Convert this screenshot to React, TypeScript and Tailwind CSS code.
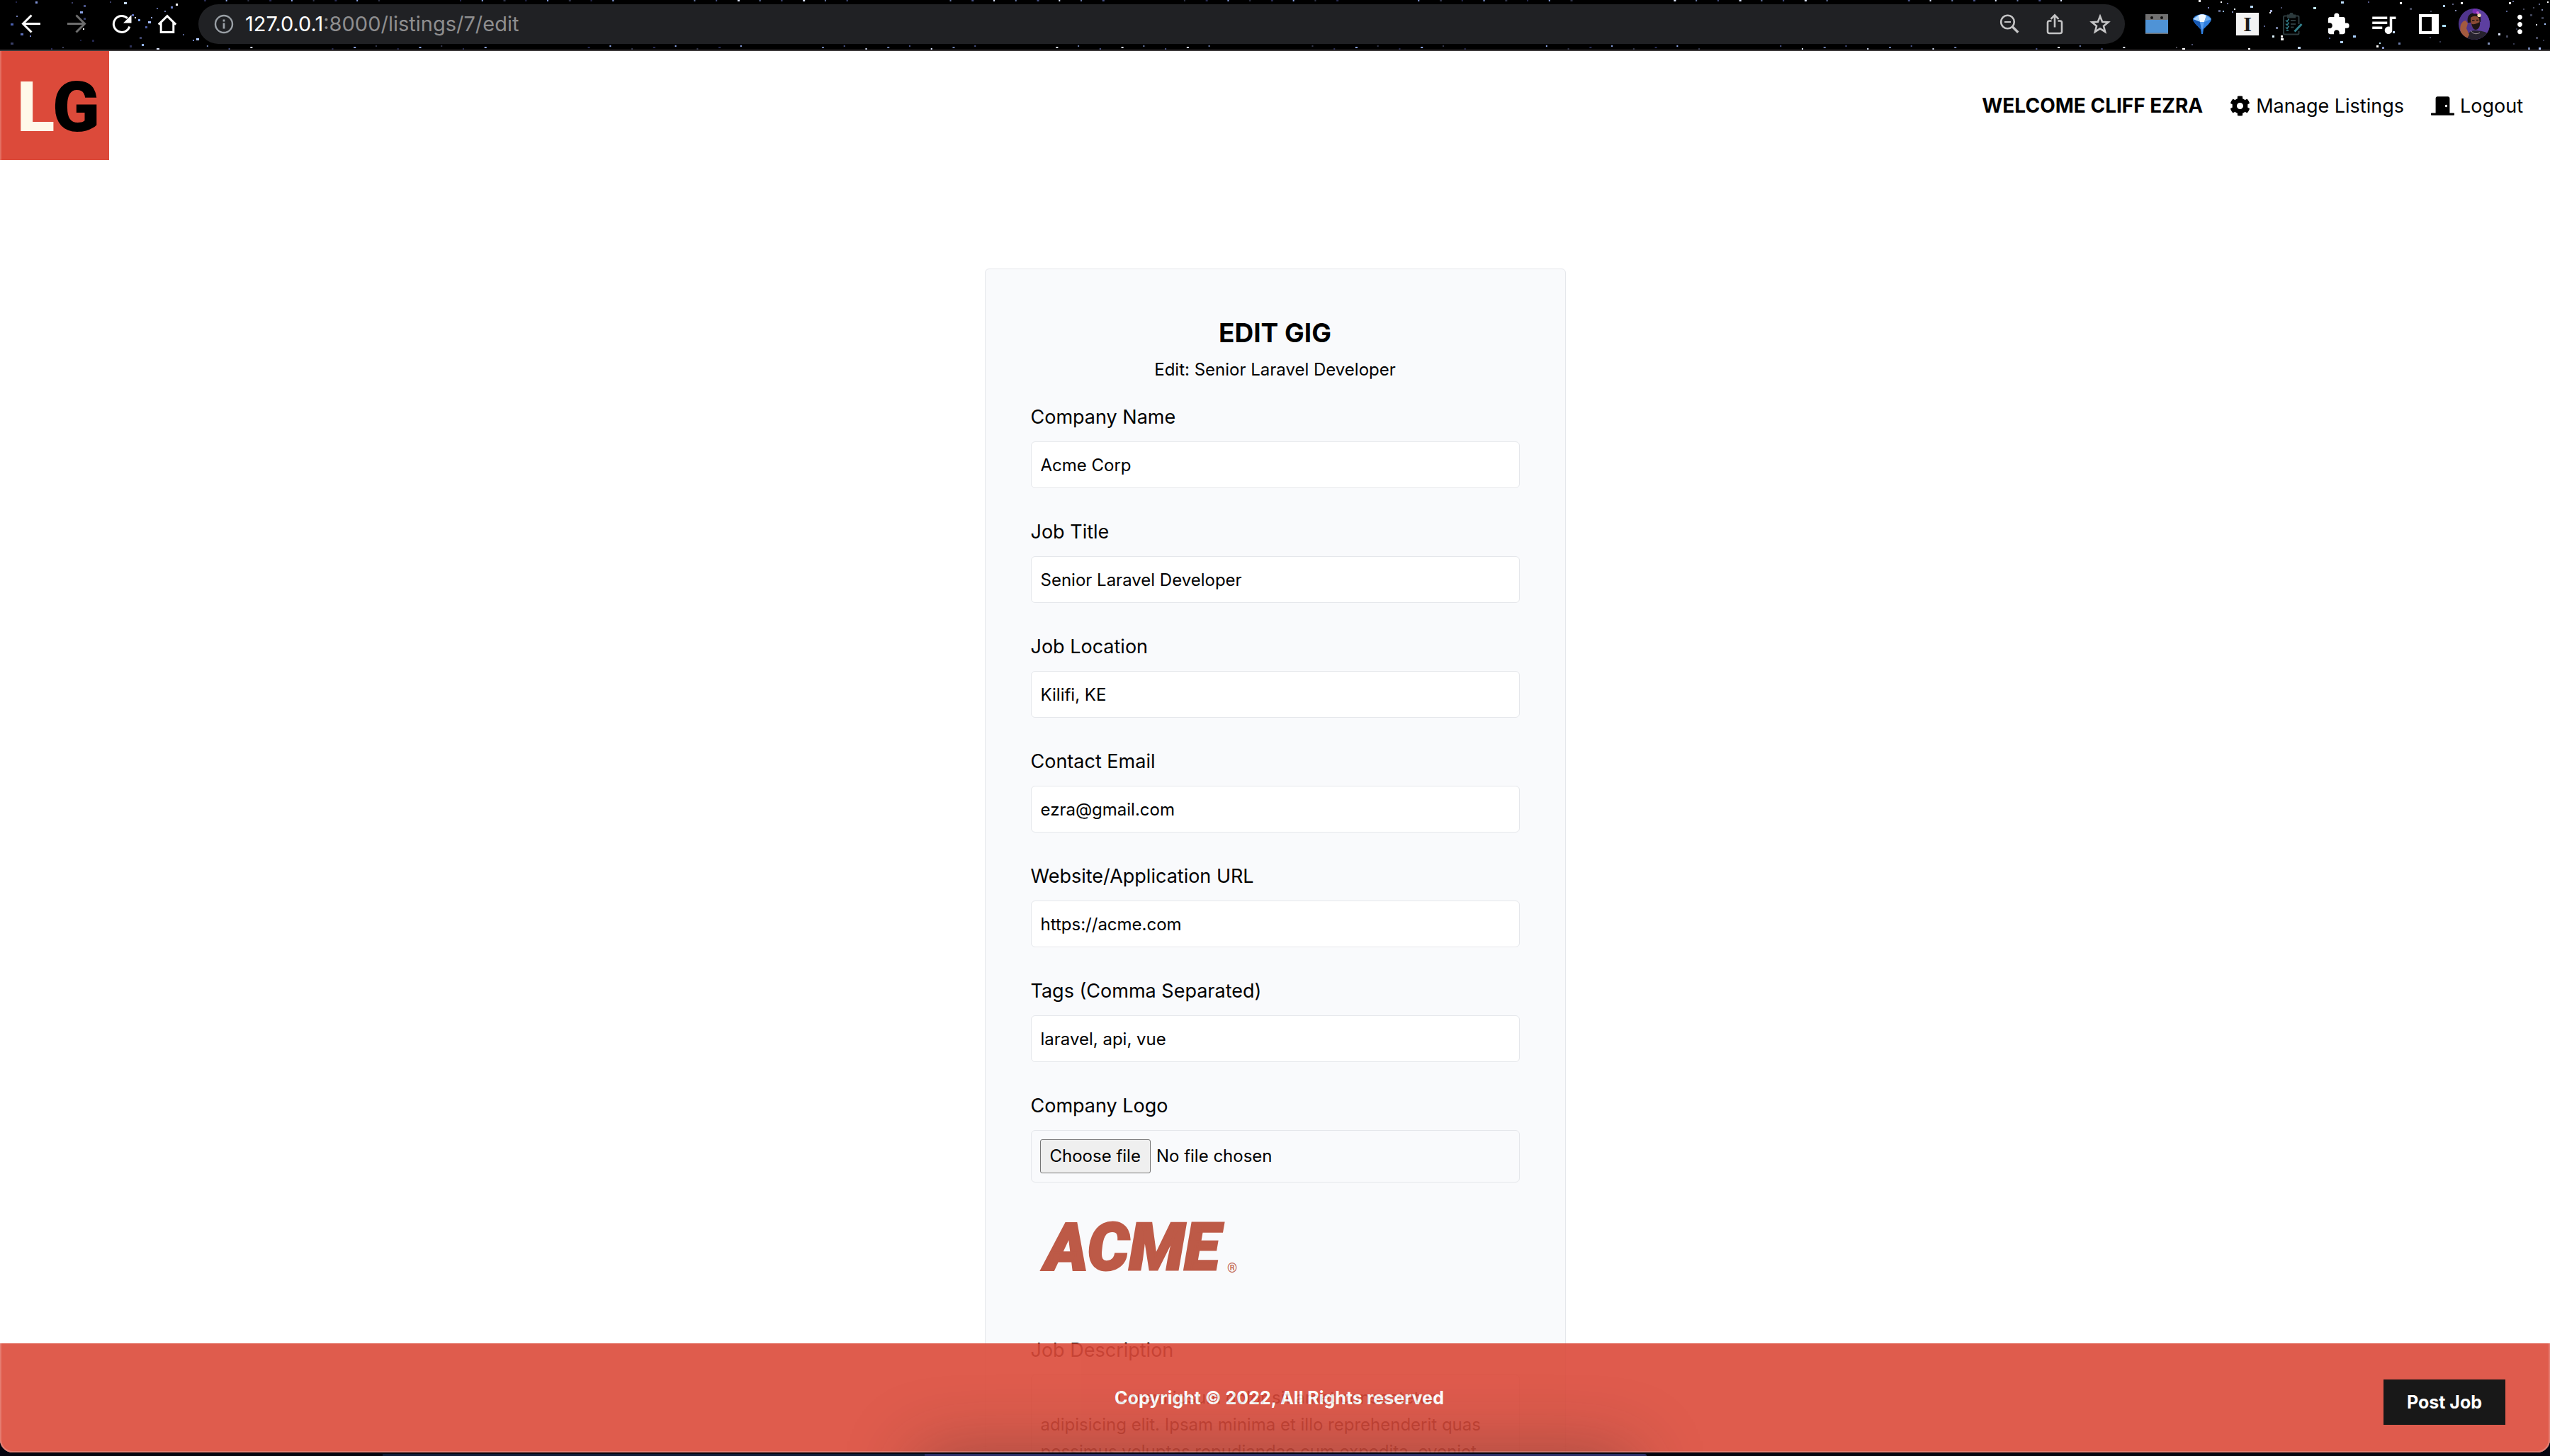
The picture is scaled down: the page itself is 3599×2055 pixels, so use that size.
import React from "react";
import { FaCog, FaDoorClosed } from "react-icons/fa";
import { MdQueueMusic, MdExtension, MdMoreVert } from "react-icons/md";

type Star = [number, number, number, string];

const LEFT_STARS: Star[] = [
  [50, 2, 3, "#7f93d8"], [175, 3, 4, "#c6dcff"], [101, 3, 2, "#3a3d66"], [118, 7, 3, "#4a5488"],
  [113, 16, 4, "#8ea6e8"], [118, 25, 3, "#333a66"], [248, 5, 3, "#ffffff"], [241, 9, 3, "#6f83c8"],
  [221, 11, 2, "#5a679c"], [190, 24, 2, "#ffffff"], [195, 27, 3, "#7fa0e8"], [209, 30, 4, "#a8c0ff"],
  [205, 37, 3, "#4a5aa0"], [15, 33, 4, "#4a5fae"], [29, 47, 4, "#5b6cb4"], [42, 50, 2, "#6e7cc0"],
  [15, 60, 4, "#3a3f66"], [117, 40, 2, "#ffffff"], [130, 56, 3, "#22264c"], [197, 52, 3, "#40466e"],
  [200, 62, 3, "#93b4ff"], [183, 64, 3, "#2d3158"], [221, 68, 4, "#dfe8ff"], [277, 54, 4, "#b5cdff"],
  [272, 56, 2, "#6f83c8"], [258, 48, 2, "#55608f"], [232, 15, 2, "#6b76a8"], [213, 24, 2, "#8fa0d8"],
  [186, 20, 3, "#5a6bb4"], [22, 2, 2, "#20234a"], [155, 2, 2, "#3c4068"], [88, 66, 2, "#3b3f5a"],
  [72, 68, 2, "#26295a"], [113, 56, 2, "#1b2044"], [23, 22, 2, "#6c7ab0"],
];

const RIGHT_STARS: Star[] = [
  [781, 2, 2, "#53588a"], [542, 0, 3, "#ffffff"], [582, 4, 2, "#6b6f9c"], [573, 2, 2, "#ffffff"],
  [555, 10, 2, "#7f86c0"], [570, 14, 3, "#60688c"], [576, 15, 2, "#8fb4e8"], [589, 16, 2, "#8088b0"],
  [592, 12, 2, "#dff4ff"], [615, 8, 4, "#b8d8ff"], [643, 14, 3, "#a0a8d0"], [642, 17, 2, "#ffffff"],
  [658, 10, 2, "#4c5070"], [634, 36, 2, "#55608f"], [651, 38, 3, "#6b7698"], [646, 50, 3, "#dff4ff"],
  [658, 54, 4, "#ffffff"], [612, 68, 3, "#ffffff"], [532, 62, 2, "#4c5070"], [519, 68, 4, "#ffffff"],
  [510, 66, 2, "#4c4a55"], [704, 10, 4, "#bfe8ff"], [743, 2, 4, "#bfe0ff"], [826, 3, 3, "#ffffff"],
  [840, 11, 3, "#44485c"], [869, 15, 2, "#44485c"], [887, 7, 3, "#a8c8ff"], [900, 5, 2, "#5c6080"],
  [886, 35, 5, "#a8dcff"], [868, 52, 2, "#44485c"], [882, 58, 2, "#33374c"], [760, 50, 4, "#a8d0ff"],
  [726, 53, 2, "#55608f"], [742, 58, 4, "#b0d0ff"], [658, 50, 3, "#ffffff"], [682, 66, 4, "#c0d8ff"],
  [797, 60, 2, "#bfe8ff"], [793, 64, 3, "#ffffff"], [801, 66, 3, "#8090c0"], [824, 60, 3, "#6b7ca8"],
  [816, 44, 3, "#c8dcff"], [950, 60, 3, "#8090b8"], [965, 47, 3, "#dfe8ff"], [976, 50, 3, "#44485c"],
  [980, 3, 3, "#ffffff"], [985, 1, 2, "#60688c"], [976, 15, 2, "#55608f"], [1000, 12, 2, "#44485c"],
  [1010, 20, 3, "#3c4054"], [1018, 34, 2, "#dfe8ff"], [1026, 13, 2, "#8088b0"], [1022, 5, 2, "#60688c"],
  [1030, 33, 2, "#a8c8ff"], [1018, 52, 3, "#44485c"], [1007, 67, 3, "#6b7ca8"], [1022, 67, 3, "#a8c0ff"],
  [1028, 56, 2, "#33374c"], [1034, 2, 2, "#ffffff"], [1026, 24, 3, "#3c4054"], [986, 61, 2, "#33374c"],
  [912, 3, 3, "#ffffff"], [904, 14, 2, "#8088b0"], [990, 40, 2, "#33374c"], [1014, 10, 2, "#44485c"],
];

const STAR_TINTS = ["#2a2d55", "#4a5488", "#8ea6e8", "#dfe8ff", "#33374c", "#6b7ca8"];
const EDGE_STARS = Array.from({ length: 130 }, (_, i) => ({
  x: 8 + ((i * 61.8034) % 76),
  y: i % 2 ? 63 + ((i * 7) % 6) : (i * 5) % 5,
  size: 2 + (i % 3 === 0 ? 1 : 0),
  tint: STAR_TINTS[(i * 7 + (i >> 2)) % STAR_TINTS.length],
}));

function StarField() {
  return (
    <div aria-hidden="true" className="absolute inset-0 flex justify-between overflow-hidden">
      <svg width="290" height="70" className="shrink-0">
        {LEFT_STARS.map(([x, y, s, c], i) => (
          <rect key={i} x={x} y={y} width={s} height={s > 3 ? 3 : s} fill={c} />
        ))}
      </svg>
      <svg height="70" className="absolute inset-0 w-full">
        {EDGE_STARS.map((s, i) => (
          <rect key={i} x={`${s.x}%`} y={s.y} width={s.size} height="2" fill={s.tint} />
        ))}
      </svg>
      <svg width="1080" height="70" viewBox="-30 0 1080 70" className="shrink-0">
        {RIGHT_STARS.map(([x, y, s, c], i) => (
          <rect key={i} x={x + 12} y={y} width={s} height={s > 3 ? 3 : s} fill={c} />
        ))}
      </svg>
    </div>
  );
}

function BarButton({ label, children }: { label: string; children: React.ReactNode }) {
  return (
    <button type="button" aria-label={label} className="flex h-14 w-16 shrink-0 items-center justify-center text-white">
      {children}
    </button>
  );
}

function BrowserBar() {
  return (
    <header className="relative flex h-[72px] shrink-0 items-center border-b-2 border-[#3e3a3b] bg-black pr-[11px] pb-0.5 pl-3">
      <StarField />
      <nav aria-label="Browser" className="relative flex">
        <BarButton label="Back">
          <svg width="28" height="28" viewBox="0 0 28 28" fill="none" stroke="currentColor" strokeWidth="3">
            <path d="M27 13.5H3M14.5 1.5l-12 12 12 12" />
          </svg>
        </BarButton>
        <BarButton label="Forward">
          <svg width="28" height="28" viewBox="0 0 28 28" fill="none" stroke="#6d6d6d" strokeWidth="3">
            <path d="M1 13.5h24M13.5 1.5l12 12-12 12" />
          </svg>
        </BarButton>
        <BarButton label="Reload">
          <svg width="28" height="28" viewBox="0 0 28 28" fill="none" stroke="currentColor" strokeWidth="3">
            <path d="M24.8 17.5A11.5 11.5 0 1 1 21.8 5.6" />
            <path d="M27.5 1v11.5H16z" fill="currentColor" stroke="none" />
          </svg>
        </BarButton>
        <BarButton label="Home">
          <svg width="28" height="28" viewBox="0 0 28 28" fill="none" stroke="currentColor" strokeWidth="3">
            <path d="M1.8 14.6L14 2.6l12.2 12" />
            <path d="M5.2 12v13.4h17.6V12" />
          </svg>
        </BarButton>
      </nav>
      <div className="relative mr-[13px] ml-3 flex h-14 flex-1 items-center rounded-full bg-[#202124] pr-[3px] pl-[22px]">
        <svg width="28" height="28" viewBox="0 0 28 28" fill="none" stroke="#9aa0a6" strokeWidth="2.4" aria-hidden="true">
          <circle cx="14" cy="14" r="12" />
          <path d="M14 12.5v8M14 7.5v3" strokeWidth="2.8" />
        </svg>
        <p className="ml-4 flex-1 text-[29px] leading-8 text-[#8e8e8f]">
          <span className="text-white">127.0.0.1</span>:8000/listings/7/edit
        </p>
        <BarButton label="Zoom out">
          <svg width="28" height="28" viewBox="0 0 28 28" fill="none" stroke="#c4c4c5" strokeWidth="2.6">
            <circle cx="11.5" cy="11" r="9.3" />
            <path d="M18.3 17.8l8 8" strokeWidth="3.4" />
            <path d="M7 11h9" strokeWidth="2" />
          </svg>
        </BarButton>
        <BarButton label="Share">
          <svg width="28" height="30" viewBox="0 0 28 30" fill="none" stroke="#c4c4c5" strokeWidth="2.6">
            <path d="M9.5 10.5H6.5a2.5 2.5 0 0 0-2.5 2.5v12.5a2.5 2.5 0 0 0 2.5 2.5h15a2.5 2.5 0 0 0 2.5-2.5V13a2.5 2.5 0 0 0-2.5-2.5h-3" />
            <path d="M14 19.5V2.5M8.5 7.8L14 2.3l5.5 5.5" />
          </svg>
        </BarButton>
        <BarButton label="Bookmark">
          <svg width="30" height="30" viewBox="0 0 30 30" fill="none" stroke="#c4c4c5" strokeWidth="2.6">
            <path d="M15 4l3.100 7.800 8.400.6-6.500 5.300 2.100 8.200L15 21.400l-7.100 4.500L10 17.700 3.500 12.400l8.400-.6z" />
          </svg>
        </BarButton>
      </div>
      <div className="relative flex">
        <BarButton label="Window extension">
          <svg width="32" height="28" viewBox="0 0 32 28">
            <rect width="32" height="28" rx="1" fill="#4f93d6" />
            <rect width="32" height="8" rx="1" fill="#717171" />
            <circle cx="9" cy="5" r="2" fill="#111" />
            <circle cx="23" cy="5" r="2" fill="#111" />
            <rect y="26.5" width="32" height="1.5" fill="#6d6d6d" />
          </svg>
        </BarButton>
        <BarButton label="Gem extension">
          <svg width="28" height="30" viewBox="0 0 28 30">
            <path d="M1 8C3 3 9 1 14 1s11 2 13 7c0 4-6 9-11 14l-1 7h-2l-1-7C7 17 1 12 1 8z" fill="#2f7fe0" />
            <path d="M8 3c4-2.500 8-2.500 12 0l-3 9h-6z" fill="#f2f9ff" />
            <path d="M1 8l7-5 3 9z" fill="#a9d3fb" />
            <path d="M27 8l-7-5-3 9z" fill="#69a9ee" />
            <path d="M1 8l10 4 2 12C8 18 2 13 1 8z" fill="#1759b4" />
            <path d="M11 12h6l-3 13z" fill="#5ba0f0" />
          </svg>
        </BarButton>
        <BarButton label="Reader extension">
          <span className="flex size-8 items-center justify-center bg-[#f3f3f3] font-['Liberation_Serif',serif] text-[30px] leading-8 font-bold text-[#1a1a1a]">
            I
          </span>
        </BarButton>
        <BarButton label="Checklist extension">
          <svg width="28" height="32" viewBox="0 0 28 32" fill="none" stroke="#2c3a3d" strokeWidth="2">
            <path d="M7 4.500H2.500a1.500 1.500 0 0 0-1.500 1.500v23a1.500 1.500 0 0 0 1.500 1.500h18.500a1.500 1.500 0 0 0 1.500-1.500V26M16 4.500h5a1.500 1.500 0 0 1 1.500 1.500v10" />
            <path d="M7 3.500h2.500l1.500-2.500h2l1.500 2.500H17v3H7z" fill="#2c3a3d" />
            <path d="M11 11h7M11 16h7M11 20.500h4.500" />
            <path d="M4 10.500l2 2 2.500-4M4 15.500l2 2 2.500-4M4 20.500l2 2 2.500-4M5 25h3" stroke="#33808c" strokeWidth="1.500" />
            <path d="M16.500 26.500L26.500 16" stroke="#33808c" strokeWidth="3" />
          </svg>
        </BarButton>
        <BarButton label="Extensions">
          <MdExtension size={34} />
        </BarButton>
        <BarButton label="Media control">
          <MdQueueMusic size={42} />
        </BarButton>
        <BarButton label="Side panel">
          <svg width="28" height="28" viewBox="0 0 28 28">
            <path fillRule="evenodd" fill="currentColor" d="M0 0h28v28H0zM4 4v20h14V4z" />
          </svg>
        </BarButton>
        <BarButton label="Profile">
          <svg width="44" height="44" viewBox="0 0 44 44" className="rounded-full">
            <rect width="44" height="44" fill="#50358c" />
            <rect x="24" width="20" height="44" fill="#5d3fa0" />
            <path d="M12 44c0-9 4-13 11-13s17 2 21 6v7z" fill="#26222e" />
            <path d="M3 23c2-4 4-6 7-6l3 4-2 7 4 9-4 7C3 40 1 31 3 23z" fill="#a35a3e" />
            <path d="M13 20c-2-9 3-14 10-14s9 6 8 13z" fill="#1a1416" />
            <path d="M17 13c4-3 9-3 12 1l1 9c-1 5-4 7-7 6-4-1-6-7-6-16z" fill="#8a4a34" />
            <path d="M18 21c3 3 6 0 8 0l4-2c1 6-2 11-6 11-3 0-5-4-6-9z" fill="#1c1414" />
            <path d="M19 17h3.500M25 16.500h3" stroke="#1c1414" strokeWidth="1.500" />
            <path d="M17 31c3 5 8 6 13 3" stroke="#a89aa0" strokeWidth="1" fill="none" />
            <circle cx="23" cy="4" r="3.500" fill="#7a2fb8" />
            <circle cx="29" cy="9.500" r="2.600" fill="#f0d9b0" />
            <circle cx="27" cy="6" r="2" fill="#c75bd0" />
          </svg>
        </BarButton>
        <BarButton label="Menu">
          <MdMoreVert size={41} />
        </BarButton>
      </div>
    </header>
  );
}

function SiteLogo() {
  return (
    <a href="#" aria-label="Home page" className="block">
      <svg width="154" height="154" viewBox="0 0 154 154" className="block font-['Roboto',sans-serif] font-black">
        <rect width="154" height="154" fill="#dc4a3a" />
        <text x="24" y="113" fontSize="98" fill="#fff9e9">
          L<tspan fill="#000">G</tspan>
        </text>
      </svg>
    </a>
  );
}

function AcmeLogo() {
  return (
    <svg
      width="307"
      height="175"
      viewBox="0 0 307 175"
      role="img"
      aria-label="Acme company logo"
      className="mb-[38px] block font-['Roboto',sans-serif] font-black"
      fill="#bd5a47"
    >
      <text x="20" y="123" fontSize="92" fontStyle="italic" stroke="#bd5a47" strokeWidth="3">
        ACME
      </text>
      <text x="277" y="127" fontSize="18" fontWeight="400">
        ®
      </text>
    </svg>
  );
}

const FIELDS = [
  { id: "company", label: "Company Name", value: "Acme Corp" },
  { id: "title", label: "Job Title", value: "Senior Laravel Developer" },
  { id: "location", label: "Job Location", value: "Kilifi, KE" },
  { id: "email", label: "Contact Email", value: "ezra@gmail.com" },
  { id: "website", label: "Website/Application URL", value: "https://acme.com" },
  { id: "tags", label: "Tags (Comma Separated)", value: "laravel, api, vue" },
];

const DESCRIPTION =
  "                Lorem ipsum dolor sit amet consectetur\nadipisicing elit. Ipsam minima et illo reprehenderit quas\npossimus voluptas repudiandae cum expedita, eveniet";

function FieldLabel({ htmlFor, children }: { htmlFor: string; children: React.ReactNode }) {
  return (
    <label htmlFor={htmlFor} className="mb-[11px] block text-[27px] leading-[47px]">
      {children}
    </label>
  );
}

function EditForm() {
  return (
    <form className="mx-auto mt-[153px] w-full max-w-[820px] rounded-md border border-gray-200 bg-[#f9fafc] p-16">
      <div className="mb-6 text-center">
        <h2 className="mb-2 text-[37px] leading-[51px] font-bold">EDIT GIG</h2>
        <p className="text-2xl leading-[38px]">Edit: Senior Laravel Developer</p>
      </div>
      {FIELDS.map((f) => (
        <div key={f.id} className="mb-[38px]">
          <FieldLabel htmlFor={f.id}>{f.label}</FieldLabel>
          <input
            id={f.id}
            type="text"
            defaultValue={f.value}
            className="block h-[66px] w-full rounded-md border border-gray-200 bg-white px-[13px] text-2xl leading-[38px]"
          />
        </div>
      ))}
      <div>
        <FieldLabel htmlFor="logo">Company Logo</FieldLabel>
        <div className="relative flex h-[74px] items-center rounded-md border border-gray-200 px-3 text-2xl">
          <input id="logo" type="file" className="sr-only" />
          <label htmlFor="logo" className="flex h-12 items-center rounded-[3px] border border-[#767676] bg-[#efefef] px-[13px]">
            Choose file
          </label>
          <span className="ml-2">No file chosen</span>
        </div>
        <AcmeLogo />
      </div>
      <FieldLabel htmlFor="description">Job Description</FieldLabel>
      <textarea
        id="description"
        rows={10}
        defaultValue={DESCRIPTION}
        className="block w-full resize-none overflow-hidden rounded-md border border-gray-200 bg-white p-[13px] text-2xl leading-[38px] whitespace-pre"
      />
    </form>
  );
}

export default function App() {
  return (
    <div className="flex h-screen flex-col overflow-hidden bg-[#05040f] font-['Inter',sans-serif] text-black">
      <BrowserBar />
      <div className="relative min-h-0 flex-1 overflow-hidden rounded-b-[18px] bg-white">
        <nav className="flex items-center justify-between">
          <SiteLogo />
          <ul className="mr-[38px] flex items-center gap-[38px] text-[27px] leading-[45px]">
            <li className="text-[28px] font-bold">WELCOME CLIFF EZRA</li>
            <li>
              <a href="#" className="flex items-center gap-2">
                <FaCog size={29} />
                Manage Listings
              </a>
            </li>
            <li>
              <button type="button" className="flex items-center gap-2">
                <FaDoorClosed size={33} />
                Logout
              </button>
            </li>
          </ul>
        </nav>
        <EditForm />
        <footer className="absolute inset-x-0 bottom-0 grid h-[154px] grid-cols-[1fr_auto_1fr] items-center bg-[#dc4a3a] text-[25px] leading-[38px] font-bold text-white opacity-90">
          <p className="col-start-2 ml-3">Copyright © 2022, All Rights reserved</p>
          <a href="#" className="mt-3 mr-[63px] justify-self-end bg-black px-[33px] py-[13px]">
            Post Job
          </a>
        </footer>
        <div
          aria-hidden="true"
          className="pointer-events-none absolute inset-x-[36%] -bottom-40 h-40 shadow-[0_0_100px_rgba(40,40,40,0.34)]"
        />
        <div aria-hidden="true" className="pointer-events-none absolute inset-0 rounded-b-[18px] border-x-2 border-b-2 border-white/20" />
      </div>
      <div aria-hidden="true" className="flex h-[5px] shrink-0 pl-[15%]">
        <div className="mt-0.5 w-1/4 bg-[#101c38]" />
        <div className="mt-0.5 w-1/3 rounded-tr-md bg-[#2c3068]" />
      </div>
    </div>
  );
}
